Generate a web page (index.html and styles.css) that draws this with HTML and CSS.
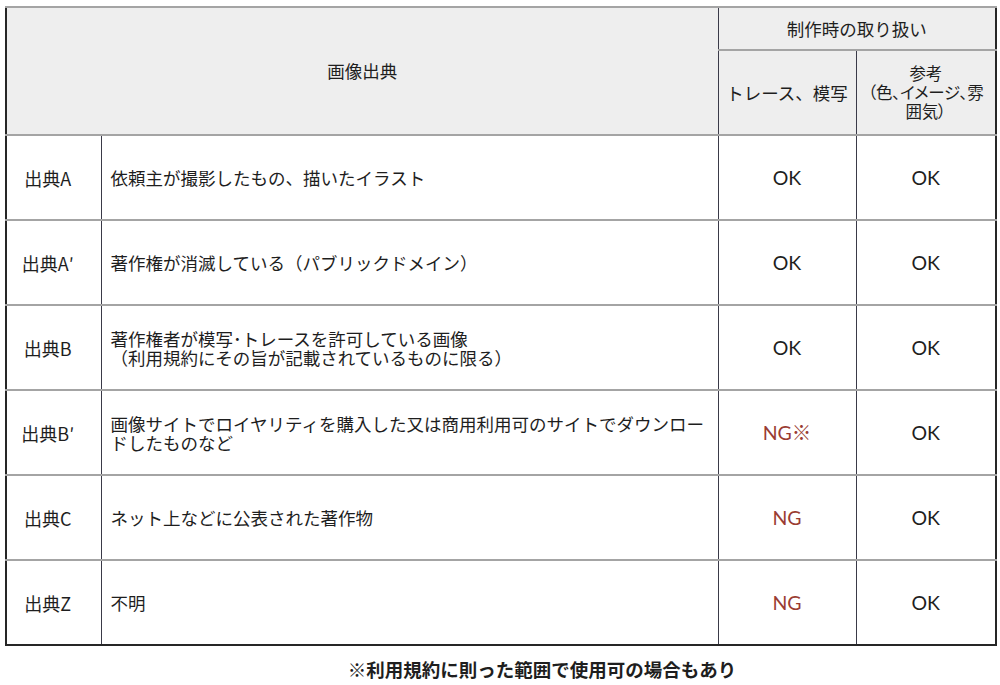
FILE: index.html
```html
<!DOCTYPE html>
<html lang="ja">
<head>
<meta charset="utf-8">
<title>画像出典</title>
<link rel="stylesheet" href="styles.css">
</head>
<body>
<table class="grid">
  <colgroup>
    <col class="c-id">
    <col class="c-desc">
    <col class="c-trace">
    <col class="c-ref">
  </colgroup>
  <thead>
    <tr class="h1">
      <th class="hd-main" colspan="2" rowspan="2">画像出典</th>
      <th class="hd-top" colspan="2">制作時の取り扱い</th>
    </tr>
    <tr class="h2">
      <th class="hd-sub">トレース、模写</th>
      <th class="hd-sub hd-ref">参考<br>（色、イメージ、雰<br>囲気）</th>
    </tr>
  </thead>
  <tbody>
    <tr>
      <td class="id">出典A</td>
      <td class="desc">依頼主が撮影したもの、描いたイラスト</td>
      <td class="ok">OK</td>
      <td class="ok">OK</td>
    </tr>
    <tr>
      <td class="id">出典A′</td>
      <td class="desc">著作権が消滅している（パブリックドメイン）</td>
      <td class="ok">OK</td>
      <td class="ok">OK</td>
    </tr>
    <tr>
      <td class="id">出典B</td>
      <td class="desc">著作権者が模写･トレースを許可している画像<br>（利用規約にその旨が記載されているものに限る）</td>
      <td class="ok">OK</td>
      <td class="ok">OK</td>
    </tr>
    <tr>
      <td class="id">出典B′</td>
      <td class="desc">画像サイトでロイヤリティを購入した又は商用利用可のサイトでダウンロー<br>ドしたものなど</td>
      <td class="ng">NG※</td>
      <td class="ok">OK</td>
    </tr>
    <tr>
      <td class="id">出典C</td>
      <td class="desc">ネット上などに公表された著作物</td>
      <td class="ng">NG</td>
      <td class="ok">OK</td>
    </tr>
    <tr>
      <td class="id">出典Z</td>
      <td class="desc">不明</td>
      <td class="ng">NG</td>
      <td class="ok">OK</td>
    </tr>
  </tbody>
</table>
<p class="note">※利用規約に則った範囲で使用可の場合もあり</p>
</body>
</html>
```

FILE: styles.css
```css
html, body {
  margin: 0;
  padding: 0;
  background: #ffffff;
}

body {
  font-family: "Noto Sans CJK JP", "Noto Sans", sans-serif;
  color: #1e1e1e;
  font-size: 17.5px;
}

.grid {
  margin: 6px 0 0 5px;
  width: 990px;
  table-layout: fixed;
  border-collapse: collapse;
  border: 2px solid #262626;
}

.c-id { width: 95px; }
.c-desc { width: 617px; }
.c-trace { width: 138px; }
.c-ref { width: 140px; }

.grid th,
.grid td {
  padding: 0;
  vertical-align: middle;
  border-left: 1px solid #3a3a48;
  border-right: 1px solid #3a3a48;
  border-top: 2px solid #a4a4a4;
  border-bottom: 2px solid #a4a4a4;
  line-height: 20px;
}

.grid thead th {
  background: #eeeeee;
  font-weight: normal;
  text-align: center;
}

.h1 { height: 43px; }
.h2 { height: 85px; }

.grid tbody tr { height: 85px; }

.grid tbody tr:last-child td { border-bottom: 2px solid #262626; }

.grid .hd-ref {
  font-size: 16.5px;
  line-height: 19px;
  white-space: nowrap;
  font-feature-settings: "palt";
  letter-spacing: -0.3px;
}

.grid .id {
  text-align: center;
  padding-right: 12px;
  font-size: 18px;
}

.grid .desc {
  text-align: left;
  padding-left: 9px;
  white-space: nowrap;
  font-size: 17.5px;
  line-height: 19px;
}

.grid .ok,
.grid .ng {
  text-align: center;
  font-family: "Lato", "Noto Sans CJK JP", sans-serif;
  font-size: 19.5px;
}

.grid .ng { color: #9a3c32; }

.note {
  margin: 12px 0 0 0;
  padding-left: 84px;
  text-align: center;
  font-weight: bold;
  font-size: 18.5px;
  line-height: 22px;
}
```
